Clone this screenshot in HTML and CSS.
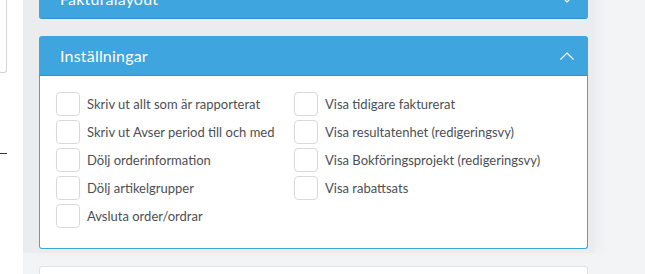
FILE: index.html
```html
<!DOCTYPE html>
<html lang="sv">
<head>
<meta charset="utf-8">
<link rel="stylesheet" href="styles.css">
</head>
<body>
<div class="sidebar">
  <div class="side-box"></div>
  <div class="side-line"></div>
</div>
<main class="content">
  <div class="column">
    <section class="card card-collapsed">
      <header class="card-head">
        <span class="card-title">Fakturalayout</span>
        <svg class="chev" width="14" height="8" viewBox="0 0 14 8"><path d="M0.5 0.5 L7 7 L13.5 0.5" fill="none" stroke="#fff" stroke-width="1.2"/></svg>
      </header>
    </section>
    <section class="card">
      <header class="card-head">
        <span class="card-title">Inställningar</span>
        <svg class="chev" width="14" height="8" viewBox="0 0 14 8"><path d="M0.5 7.5 L7 1 L13.5 7.5" fill="none" stroke="#fff" stroke-width="1.2"/></svg>
      </header>
      <div class="card-body">
        <div class="opts">
          <label class="opt"><span class="box"></span>Skriv ut allt som är rapporterat</label>
          <label class="opt"><span class="box"></span>Skriv ut Avser period till och med</label>
          <label class="opt"><span class="box"></span>Dölj orderinformation</label>
          <label class="opt"><span class="box"></span>Dölj artikelgrupper</label>
          <label class="opt"><span class="box"></span>Avsluta order/ordrar</label>
        </div>
        <div class="opts">
          <label class="opt"><span class="box"></span>Visa tidigare fakturerat</label>
          <label class="opt"><span class="box"></span>Visa resultatenhet (redigeringsvy)</label>
          <label class="opt"><span class="box"></span>Visa Bokföringsprojekt (redigeringsvy)</label>
          <label class="opt"><span class="box"></span>Visa rabattsats</label>
        </div>
      </div>
    </section>
    <section class="card card-plain"></section>
  </div>
</main>
</body>
</html>
```
FILE: styles.css
```css
html, body {
  margin: 0;
  padding: 0;
  height: 274px;
  overflow: hidden;
}
body {
  display: flex;
  background: #ffffff;
  font-family: Lato, "Open Sans", sans-serif;
}
.sidebar {
  width: 23px;
  flex: none;
  background: #ffffff;
}
.side-box {
  width: 6px;
  height: 72px;
  border-right: 1px solid #d3d5d8;
  border-bottom: 1px solid #d3d5d8;
  border-bottom-right-radius: 3px;
}
.side-line {
  width: 7px;
  height: 1px;
  margin-top: 80px;
  background: #3a3a3a;
}
.content {
  flex: 1;
  background: #f3f4f6;
  overflow: hidden;
}
.column {
  width: 549px;
  height: 100%;
  padding: 0 7px 0 16px;
  background: #ebecee;
  box-shadow: 6px 0 10px #edeef0;
}
.card {
  margin-bottom: 17px;
  border-radius: 3px;
}
.card-collapsed {
  margin-top: -21px;
}
.card-head {
  height: 40px;
  box-sizing: border-box;
  display: flex;
  align-items: center;
  justify-content: space-between;
  padding: 0 14px 0 21px;
  background: #3ea5de;
  border-bottom: 1px solid #3592cb;
  border-radius: 3px 3px 0 0;
}
.card-collapsed .card-head {
  border-radius: 3px;
}
.card-title {
  color: #ffffff;
  font-size: 16px;
  letter-spacing: 0.2px;
}
.chev {
  display: block;
}
.card-body {
  display: flex;
  background: #ffffff;
  border: 1px solid #3ea5de;
  border-top: none;
  border-radius: 0 0 3px 3px;
  padding: 16px 16px 19px;
  height: 137px;
}
.opts {
  display: flex;
  flex-direction: column;
  gap: 4px;
  width: 238px;
}
.opt {
  display: flex;
  align-items: center;
  height: 24px;
  font-size: 13px;
  color: #4b4f55;
  white-space: nowrap;
}
.box {
  width: 22px;
  height: 22px;
  border: 1px solid #d6d9dd;
  border-radius: 4px;
  margin-right: 7px;
  flex: none;
}
.card-plain {
  height: 40px;
  background: #ffffff;
  border: 1px solid #dfe1e4;
}
```
